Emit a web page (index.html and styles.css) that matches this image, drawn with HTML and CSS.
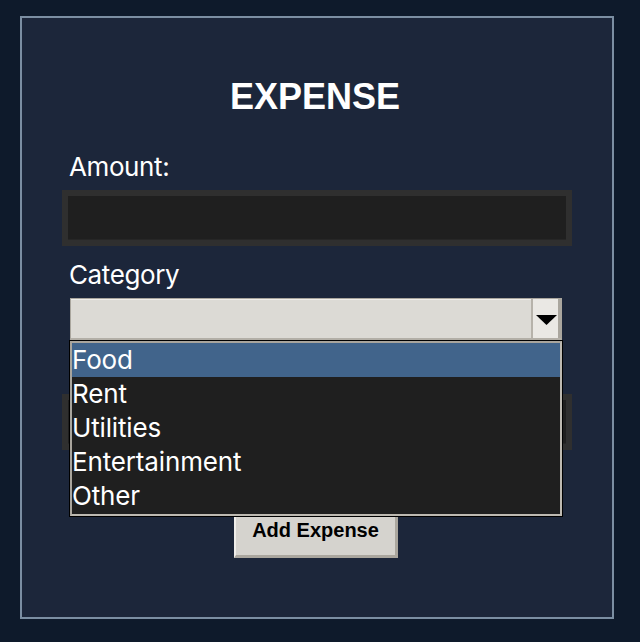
FILE: index.html
```html
<!DOCTYPE html>
<html>
<head>
<meta charset="utf-8">
<link rel="stylesheet" href="styles.css">
</head>
<body>
<div class="card">
  <h1 class="title">EXPENSE</h1>
  <div class="label label-amount">Amount:</div>
  <div class="entry"><div class="entry-inner"></div></div>
  <div class="label label-category">Category</div>
  <div class="combo-wrap">
    <div class="combo">
      <div class="combo-field"></div>
      <div class="combo-arrow">
        <svg width="21" height="10" viewBox="0 0 21 10"><polygon points="0,0 21,0 10.5,10" fill="#000"/></svg>
      </div>
    </div>
    <div class="dropdown">
      <div class="dropdown-inner">
        <div class="opt selected">Food</div>
        <div class="opt">Rent</div>
        <div class="opt">Utilities</div>
        <div class="opt">Entertainment</div>
        <div class="opt">Other</div>
      </div>
    </div>
  </div>
  <div class="entry entry-2"><div class="entry-inner"></div></div>
  <div class="btn">Add Expense</div>
</div>
</body>
</html>
```
FILE: styles.css
```css
* { box-sizing: border-box; }
html, body { margin: 0; padding: 0; }
body {
  background: #0e1a2b;
  width: 640px;
  height: 642px;
  overflow: hidden;
  font-family: "Inter", "Liberation Sans", sans-serif;
}
.card {
  position: relative;
  margin: 16px 0 0 20px;
  width: 594px;
  height: 603px;
  border: 2px solid #7b8ea2;
  background: #1c263a;
  padding-top: 59px;
  display: flex;
  flex-direction: column;
  align-items: flex-start;
}
.title {
  margin: 0;
  align-self: stretch;
  text-align: center;
  font-family: "Liberation Sans", Arial, sans-serif;
  font-weight: bold;
  font-size: 36px;
  line-height: 40px;
  color: #ffffff;
  padding-right: 4px;
}
.label {
  margin-left: 47px;
  font-size: 26px;
  line-height: 30px;
  letter-spacing: -0.4px;
  color: #ffffff;
}
.label-amount { margin-top: 35px; }
.label-category { margin-top: 14px; }
.entry {
  margin: 8px 0 0 40px;
  width: 510px;
  height: 56px;
  border: 6px solid #2f2f2f;
  background: #1f1f1f;
}
.entry-inner {
  height: 100%;
  border-bottom: 1px solid #262626;
}
.entry-2 { margin-top: 54px; }
.combo-wrap {
  position: relative;
  margin: 8px 0 0 48px;
  width: 492px;
}
.combo {
  display: flex;
  height: 42px;
  border: 1px solid #aaa69e;
  border-bottom: 2px solid #b3afa7;
  background: #dcdad5;
}
.combo-field {
  flex: 1;
  border-top: 1px solid #efede9;
}
.combo-arrow {
  width: 30px;
  border-left: 2px solid #b6b2aa;
  border-right: 3px solid #aaa69e;
  background: #eae8e4;
  display: flex;
  justify-content: center;
  padding-top: 16px;
  padding-left: 1px;
}
.combo-arrow svg { display: block; }
.dropdown {
  position: absolute;
  top: 42px;
  left: -1px;
  width: 494px;
  border: 1px solid #000;
  background: #1f1f1f;
  z-index: 5;
}
.dropdown-inner {
  border: 2px solid #bdb9b1;
  border-top-color: #a9a59d;
  border-left-color: #a9a59d;
  padding-bottom: 1px;
}
.opt {
  height: 34px;
  line-height: 34px;
  padding-left: 0;
  font-size: 26px;
  letter-spacing: -0.15px;
  color: #ffffff;
  white-space: nowrap;
}
.opt.selected { background: #41648b; }
.btn {
  margin: 64px 0 0 212px;
  width: 164px;
  height: 44px;
  background: #d5d3ce;
  border-top: 2px solid #efede9;
  border-left: 2px solid #efede9;
  border-right: 3px solid #aaa69e;
  border-bottom: 3px solid #aaa69e;
  font-family: "Liberation Sans", Arial, sans-serif;
  font-weight: bold;
  font-size: 20px;
  line-height: 29px;
  text-align: center;
  color: #000;
}
```
